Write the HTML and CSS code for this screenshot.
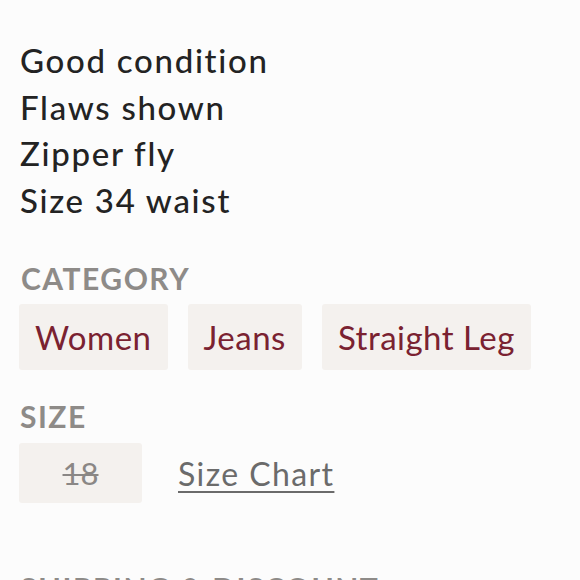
FILE: index.html
```html
<!DOCTYPE html>
<html lang="en">
<head>
<meta charset="utf-8">
<title>Listing details</title>
<link rel="stylesheet" href="styles.css">
</head>
<body>
<main class="details">
  <div class="desc">
    <div>Good condition</div>
    <div>Flaws shown</div>
    <div>Zipper fly</div>
    <div>Size 34 waist</div>
  </div>

  <h3 class="label label-category">CATEGORY</h3>
  <div class="tags">
    <a class="tag">Women</a>
    <a class="tag">Jeans</a>
    <a class="tag">Straight Leg</a>
  </div>

  <h3 class="label label-size">SIZE</h3>
  <div class="size-row">
    <span class="size-box">18</span>
    <a class="size-chart">Size Chart</a>
  </div>

  <h3 class="label label-shipping">SHIPPING &amp; DISCOUNT</h3>
</main>
</body>
</html>
```
FILE: styles.css
```css
html, body {
  margin: 0;
  padding: 0;
  background: #fcfcfc;
}
body {
  font-family: Lato, "Noto Sans", sans-serif;
  color: #222222;
  overflow: hidden;
  height: 580px;
}
.details {
  padding: 37px 20px 0 20px;
}
.desc {
  font-size: 33px;
  line-height: 46.5px;
  font-weight: 500;
  letter-spacing: 1.7px;
  color: #232323;
}
.label {
  margin: 0;
  font-size: 30px;
  line-height: 36px;
  font-weight: 700;
  letter-spacing: 1.5px;
  color: #8e8b88;
}
.label-category {
  margin-top: 37px;
  padding-left: 1px;
}
.tags {
  display: flex;
  gap: 20px;
  margin-top: 8px;
}
.tag {
  display: block;
  background: #f4f1ee;
  border-radius: 3px;
  padding: 10px 16px;
  font-size: 33px;
  line-height: 46px;
  letter-spacing: 0.5px;
  color: #7a2231;
}
.tag:first-child {
  margin-left: -1px;
}
.label-size {
  margin-top: 28px;
}
.size-row {
  display: flex;
  align-items: center;
  gap: 36px;
  margin-top: 9px;
}
.size-box {
  display: flex;
  align-items: center;
  justify-content: center;
  width: 123px;
  height: 60px;
  margin-left: -1px;
  background: #f4f1ee;
  border-radius: 3px;
  font-size: 31px;
  color: #8a8785;
  text-decoration: line-through;
  text-decoration-thickness: 2px;
}
.size-chart {
  font-size: 32px;
  letter-spacing: 1.4px;
  color: #6b6b6b;
  text-decoration: underline;
  text-decoration-thickness: 2px;
  text-underline-offset: 5px;
}
.label-shipping {
  margin-top: 67px;
}
```
